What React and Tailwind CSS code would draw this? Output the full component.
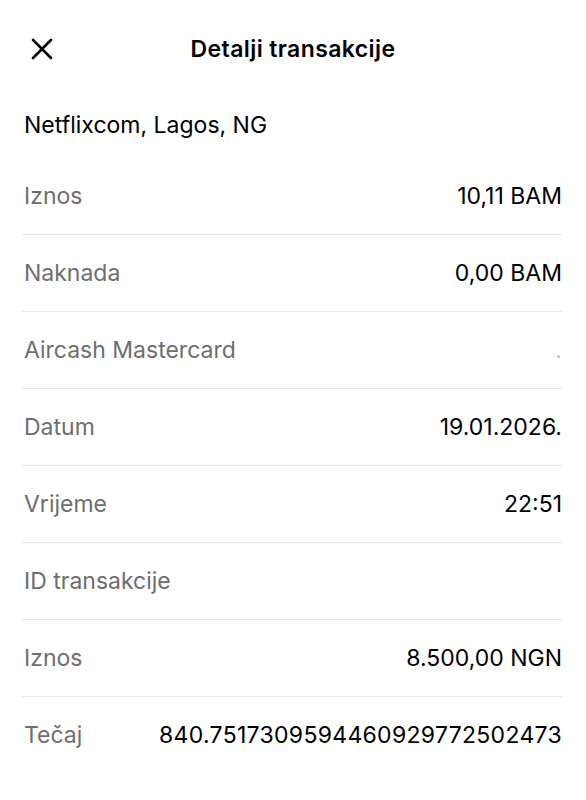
import React from 'react';

const rows = [
  { label: 'Iznos', value: '10,11 BAM' },
  { label: 'Naknada', value: '0,00 BAM' },
  { label: 'Aircash Mastercard', value: '.', faint: true },
  { label: 'Datum', value: '19.01.2026.' },
  { label: 'Vrijeme', value: '22:51' },
  { label: 'ID transakcije', value: '' },
  { label: 'Iznos', value: '8.500,00 NGN' },
  { label: 'Tečaj', value: '840.7517309594460929772502473', wide: true },
];

const DetailRow = ({ label, value, faint, wide, last }) => (
  <div
    className={`flex h-[77px] items-center justify-between ${last ? '' : 'border-b border-[#e6e6e6]'}`}
  >
    <span className="pl-[2px] text-[23px] text-[#6e6e6e]">{label}</span>
    <span
      className={`text-[23px] ${faint ? 'text-[#c8c8c8]' : 'text-black'} ${wide ? 'tracking-[0.3px]' : ''}`}
    >
      {value}
    </span>
  </div>
);

export default function App() {
  return (
    <div
      className="min-h-[800px] w-full bg-white text-black"
      style={{ fontFamily: 'Inter, "Liberation Sans", sans-serif' }}
    >
      {/* Header */}
      <div className="relative flex h-[98px] items-center justify-center">
        <button className="absolute left-[31px] top-[38px] h-[22px] w-[22px]">
          <svg viewBox="0 0 22 22" className="h-[22px] w-[22px]" fill="none" stroke="black" strokeWidth="2.6" strokeLinecap="round">
            <path d="M2 2L20 20M20 2L2 20" />
          </svg>
        </button>
        <h1 className="text-[23px] font-semibold tracking-[0.4px]">Detalji transakcije</h1>
      </div>

      {/* Merchant */}
      <div className="flex h-[60px] items-center pb-[6px] pl-6 text-[23px]">Netflixcom, Lagos, NG</div>

      {/* Details */}
      <div className="pl-[22px] pr-6">
        {rows.map((r, i) => (
          <DetailRow key={i} {...r} last={i === rows.length - 1} />
        ))}
      </div>
    </div>
  );
}
